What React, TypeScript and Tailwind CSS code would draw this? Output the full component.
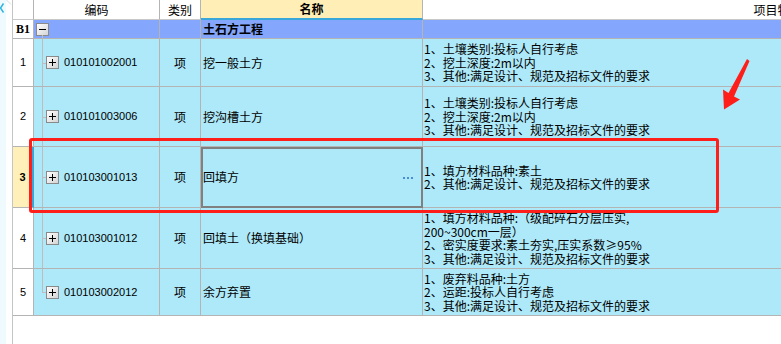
import React from "react"

type Row = {
  n: string
  code: string
  name: string
  h: string
  desc: string[]
  selected?: boolean
  last?: boolean
}

const standard = [
  "1、土壤类别:投标人自行考虑",
  "2、挖土深度:2m以内",
  "3、其他:满足设计、规范及招标文件的要求",
]

const rows: Row[] = [
  { n: "1", code: "010101002001", name: "挖一般土方", h: "h-[48px]", desc: standard },
  { n: "2", code: "010101003006", name: "挖沟槽土方", h: "h-[60px]", desc: standard },
  {
    n: "3",
    code: "010103001013",
    name: "回填方",
    h: "h-[61px]",
    desc: ["1、填方材料品种:素土", "2、其他:满足设计、规范及招标文件的要求"],
    selected: true,
  },
  {
    n: "4",
    code: "010103001012",
    name: "回填土（换填基础）",
    h: "h-[61px]",
    desc: [
      "1、填方材料品种:（级配碎石分层压实,",
      "200~300cm一层）",
      "2、密实度要求:素土夯实,压实系数≥95%",
      "3、其他:满足设计、规范及招标文件的要求",
    ],
  },
  {
    n: "5",
    code: "010103002012",
    name: "余方弃置",
    h: "h-[47px]",
    desc: ["1、废弃料品种:土方", "2、运距:投标人自行考虑", "3、其他:满足设计、规范及招标文件的要求"],
    last: true,
  },
]

const cell = "box-border border-r border-b border-[#b4b4b4] shrink-0"

function PlusBox() {
  return (
    <div className="relative w-[13px] h-[13px] border border-[#8a8a8a] bg-gradient-to-br from-white to-[#d4d4d4] shrink-0">
      <div className="absolute left-[2px] top-[5px] w-[7px] h-[1px] bg-black" />
      <div className="absolute left-[5px] top-[2px] w-[1px] h-[7px] bg-black" />
    </div>
  )
}

function MinusBox() {
  return (
    <div className="relative w-[13px] h-[13px] border border-[#8a8a8a] bg-gradient-to-br from-white to-[#d4d4d4] shrink-0">
      <div className="absolute left-[2px] top-[5px] w-[7px] h-[1px] bg-black" />
    </div>
  )
}

function DataRow({ row }: { row: Row }) {
  return (
    <div className={`flex ${row.h}`}>
      <div
        className={`${cell} w-[21px] flex items-center justify-center text-[11px] font-['Liberation_Sans',sans-serif] ${
          row.selected ? "bg-[#ffefb9] font-bold border-r-2 border-r-[#39a6da]" : "bg-white"
        }`}
      >
        {row.n}
      </div>

      {/* 编码 + tree lines */}
      <div className={`${cell} w-[126px] bg-[#aee9f9] relative flex items-center`}>
        <div className={`absolute left-[8px] top-0 w-[1px] bg-[#bdbdbd] ${row.last ? "h-1/2" : "h-full"}`} />
        <div className="absolute left-[8px] top-1/2 w-[4px] h-[1px] bg-[#bdbdbd]" />
        <div className="ml-[12px]">
          <PlusBox />
        </div>
        <span className="ml-[5px] text-[11px] font-['Liberation_Sans',sans-serif] text-black">{row.code}</span>
      </div>

      <div className={`${cell} w-[41px] bg-[#aee9f9] flex items-center justify-center text-[12px]`}>项</div>

      <div className={`${cell} w-[222px] bg-[#aee9f9] relative flex items-center pl-[2px] text-[12px]`}>
        {row.selected && (
          <div className="absolute left-0 top-0 right-[-1px] bottom-[-1px] border-2 border-[#808080] pointer-events-none" />
        )}
        <span>{row.name}</span>
        {row.selected && (
          <div className="absolute right-[9px] top-1/2 flex gap-[2px]">
            <div className="w-[2px] h-[2px] bg-[#4a8fd6]" />
            <div className="w-[2px] h-[2px] bg-[#4a8fd6]" />
            <div className="w-[2px] h-[2px] bg-[#4a8fd6]" />
          </div>
        )}
      </div>

      <div className={`${cell} w-[710px] bg-[#aee9f9] flex flex-col justify-center pl-[1px] text-[12px] leading-[13.5px] overflow-hidden`}>
        {row.desc.map((line, i) => (
          <div key={i} className="whitespace-nowrap">
            {line}
          </div>
        ))}
      </div>
    </div>
  )
}

export default function App() {
  return (
    <div className="relative w-[781px] h-[344px] overflow-hidden bg-white flex font-['Noto_Sans_CJK_SC',sans-serif] text-black">
      {/* left collapse strip */}
      <div className="relative w-[13px] h-full shrink-0 border-r border-[#c4c4c4] bg-white">
        <div className="w-[6px] h-full bg-[#eefafe]" />
        <svg className="absolute left-0 top-0" width="13" height="16" viewBox="0 0 13 16">
          <polyline points="3.5,3.5 0.5,8 3.5,12.5" fill="none" stroke="#2ab3dd" strokeWidth="1.4" />
          <polyline points="6.5,0 11,4.5" fill="none" stroke="#d6dde0" strokeWidth="1" />
        </svg>
      </div>

      <div className="relative flex-1 overflow-hidden">
        <div className="w-[1120px]">
          {/* header */}
          <div className="flex h-[20px] text-[12px]">
            <div className={`${cell} w-[21px] bg-white border-b-[#c8c8c8]`} />
            <div className={`${cell} w-[126px] bg-white border-b-[#c8c8c8] flex items-center justify-center`}>编码</div>
            <div className={`${cell} w-[41px] bg-white border-b-[#c8c8c8] flex items-center justify-center`}>类别</div>
            <div className="box-border border-r border-[#b4b4b4] border-b-2 border-b-[#3aa7da] w-[222px] shrink-0 bg-[#ffefb6] flex items-center justify-center font-bold">
              名称
            </div>
            <div className={`${cell} w-[710px] bg-white border-b-[#c8c8c8] flex items-center justify-center`}>项目特征</div>
          </div>

          {/* B1 group row */}
          <div className="flex h-[19px] text-[12px]">
            <div className={`${cell} w-[21px] bg-white flex items-center justify-center font-['Liberation_Serif',serif] font-bold text-[12px]`}>
              B1
            </div>
            <div className={`${cell} w-[126px] bg-[#84a7fd] relative flex items-center`}>
              <div className="ml-[2px]">
                <MinusBox />
              </div>
              <div className="absolute left-[8px] top-[15px] bottom-0 w-[1px] bg-[#bdbdbd]" />
            </div>
            <div className={`${cell} w-[41px] bg-[#84a7fd]`} />
            <div className={`${cell} w-[222px] bg-[#84a7fd] flex items-center pl-[2px] font-bold`}>土石方工程</div>
            <div className={`${cell} w-[710px] bg-[#84a7fd]`} />
          </div>

          {rows.map((r) => (
            <DataRow key={r.n} row={r} />
          ))}
        </div>
      </div>

      {/* red annotation box */}
      <div className="absolute left-[29px] top-[138px] w-[690px] h-[75px] border-[3px] border-[#ff1f1a] rounded-[3px] pointer-events-none" />

      {/* red annotation arrow */}
      <svg className="absolute left-0 top-0 pointer-events-none" width="781" height="344" viewBox="0 0 781 344">
        <polygon points="747,59 749.5,61 734,96.5 740,99.5 724,109.5 723,89.5 728.5,93" fill="#ff1f1a" />
      </svg>
    </div>
  )
}
